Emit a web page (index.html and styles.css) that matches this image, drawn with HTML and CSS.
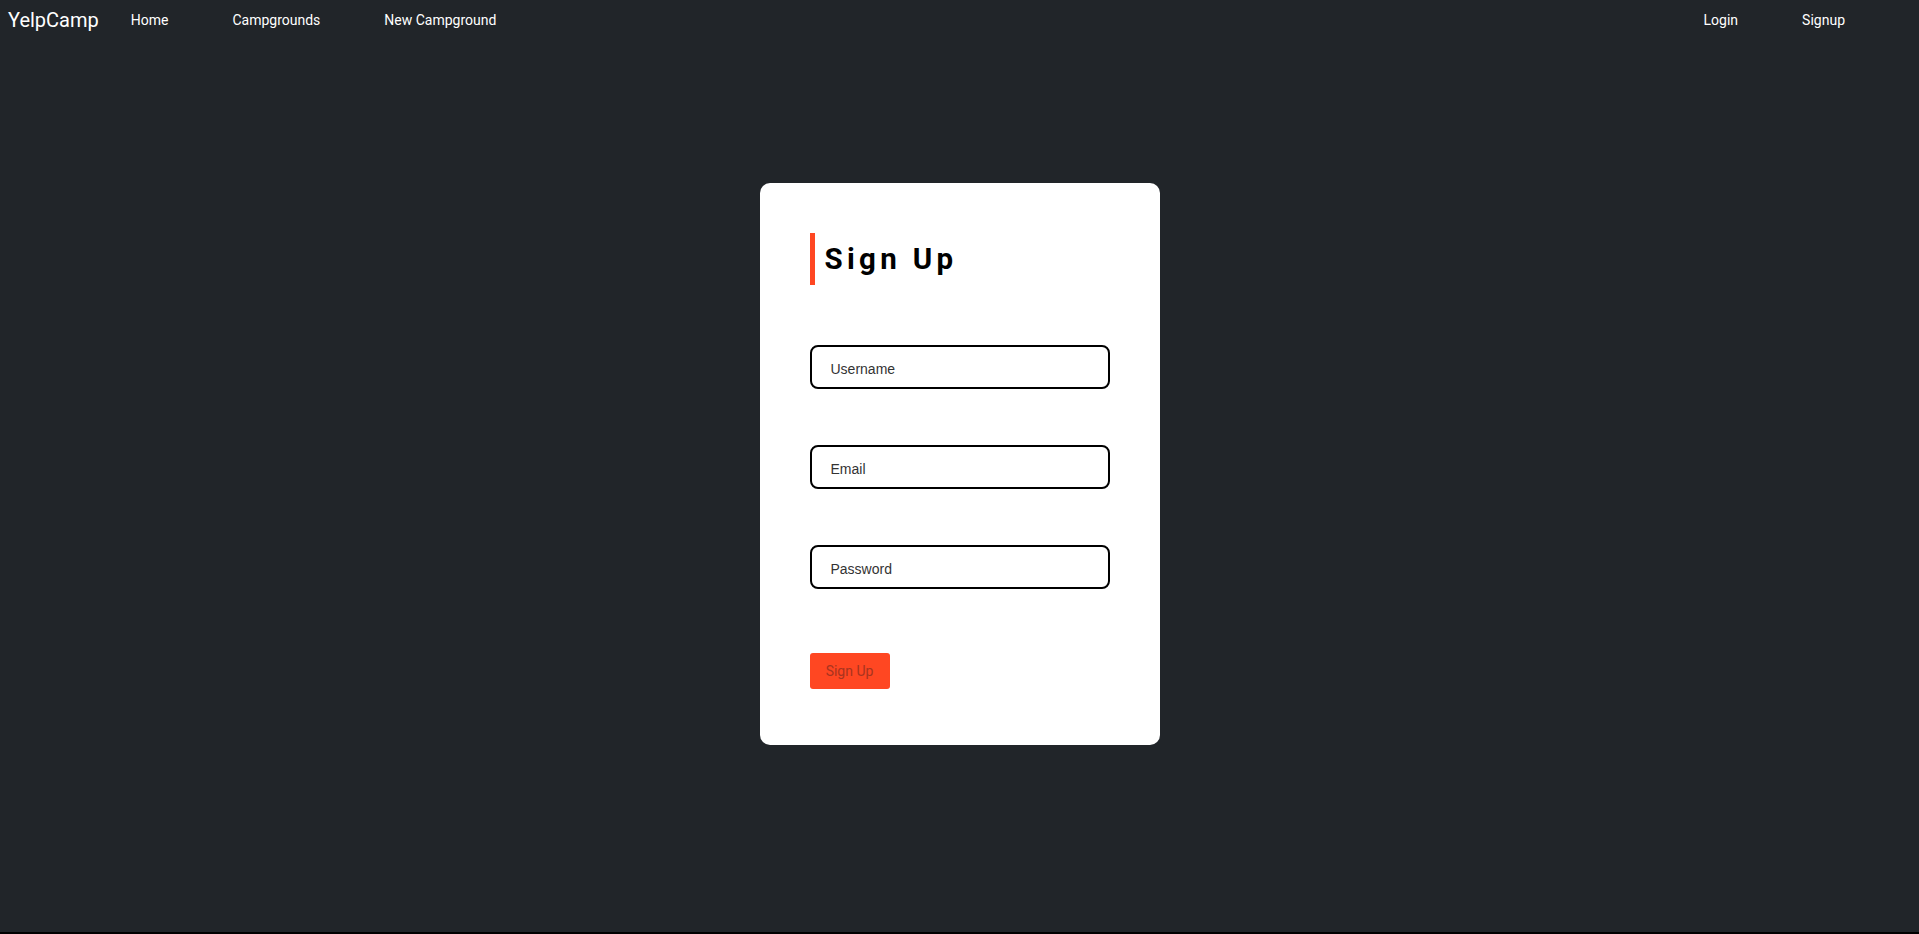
FILE: index.html
```html
<!DOCTYPE html>
<html lang="en">
<head>
<meta charset="utf-8">
<title>YelpCamp - Sign Up</title>
<link rel="stylesheet" href="styles.css">
</head>
<body>
<div class="page">
  <nav class="navbar">
    <a class="brand" href="#">YelpCamp</a>
    <div class="nav-links">
      <a class="nav-link" href="#">Home</a>
      <a class="nav-link" href="#">Campgrounds</a>
      <a class="nav-link" href="#">New Campground</a>
    </div>
    <div class="nav-links nav-right">
      <a class="nav-link" href="#">Login</a>
      <a class="nav-link" href="#">Signup</a>
    </div>
  </nav>
  <main class="main">
    <form class="card">
      <h1 class="title">Sign Up</h1>
      <div class="fields">
        <input class="field" type="text" placeholder="Username">
        <input class="field" type="email" placeholder="Email">
        <input class="field" type="password" placeholder="Password">
      </div>
      <button class="btn" type="button">Sign Up</button>
    </form>
  </main>
  <div class="bottom-strip"></div>
</div>
</body>
</html>
```

FILE: styles.css
```css
* { box-sizing: border-box; }
html, body { margin: 0; padding: 0; }
body {
  background: #212529;
  font-family: Roboto, "Liberation Sans", Arial, sans-serif;
  color: #fff;
}
.page {
  height: 100vh;
  display: flex;
  flex-direction: column;
}
.navbar {
  height: 40px;
  display: flex;
  align-items: center;
  padding: 0 0 0 8px;
}
.brand {
  color: #fff;
  text-decoration: none;
  font-size: 20px;
}
.nav-links {
  display: flex;
  align-items: center;
}
.nav-right { margin-left: auto; margin-right: 42px; }
.nav-link {
  color: #fff;
  text-decoration: none;
  font-size: 14px;
  padding: 0 32px;
}
.main {
  flex: 1;
  display: flex;
  justify-content: center;
  align-items: flex-start;
  padding-top: 143px;
}
.card {
  width: 400px;
  background: #fff;
  border-radius: 10px;
  padding: 50px 50px 56px 50px;
  display: flex;
  flex-direction: column;
  align-items: flex-start;
}
.title {
  margin: 0;
  border-left: 5px solid #ff4722;
  padding-left: 10px;
  height: 52px;
  line-height: 52px;
  font-size: 29.5px;
  font-weight: 700;
  letter-spacing: 4.3px;
  color: #000;
}
.fields {
  margin-top: 60px;
  display: flex;
  flex-direction: column;
  gap: 56px;
  width: 300px;
}
.field {
  width: 300px;
  height: 44px;
  border: 2px solid #000;
  border-radius: 8px;
  padding: 3px 19px 0 19px;
  font-family: "Liberation Sans", Arial, sans-serif;
  font-size: 14px;
  color: #222;
  outline: none;
}
.field::placeholder { color: #333; }
.btn {
  margin-top: 64px;
  width: 80px;
  height: 36px;
  border: none;
  border-radius: 3px;
  background: #ff4722;
  color: #a8341f;
  font-family: Roboto, "Liberation Sans", sans-serif;
  font-size: 14px;
  padding: 0;
}
.bottom-strip {
  height: 2px;
  background: #000;
}
```
